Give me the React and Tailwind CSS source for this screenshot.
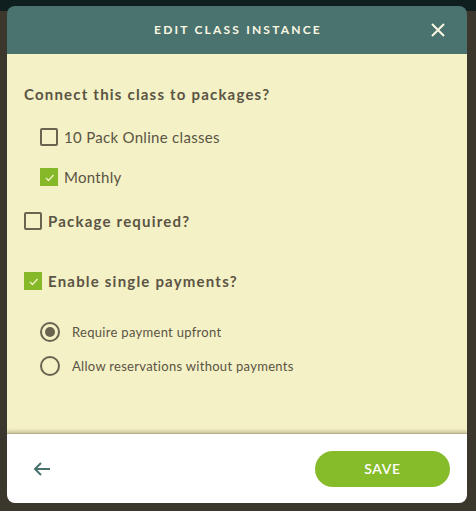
import React from "react";

const Check = () => (
  <svg viewBox="0 0 17 17" className="w-[17px] h-[17px]">
    <path d="M5 9l2.5 2.5L12.5 6" fill="none" stroke="#f4f1c6" strokeWidth="1.3" />
  </svg>
);

const Box = ({ checked }) =>
  checked ? (
    <span className="w-[18px] h-[18px] bg-[#86b92a] flex items-center justify-center shrink-0">
      <Check />
    </span>
  ) : (
    <span className="w-[18px] h-[18px] border-2 border-[#6a6350] rounded-[2px] shrink-0" />
  );

const Radio = ({ checked }) => (
  <span className="w-[20px] h-[20px] rounded-full border-2 border-[#6a6350] flex items-center justify-center shrink-0">
    {checked && <span className="w-[10px] h-[10px] rounded-full bg-[#6a6350]" />}
  </span>
);

export default function App() {
  return (
    <div
      className="w-[476px] h-[511px] bg-[#3b372d] relative overflow-hidden"
      style={{ fontFamily: "Lato, 'Noto Sans', sans-serif" }}
    >
      <div className="h-[11px] bg-[#0f1f20]" />
      <div className="absolute left-[7px] top-[6px] w-[460px] h-[497px] rounded-[8px] overflow-hidden flex flex-col">
        <div className="h-[48px] bg-[#4a7370] flex items-center justify-center relative">
          <span className="text-[12px] font-bold tracking-[2.2px] text-[#fbf8e2] ml-[2px]">
            EDIT CLASS INSTANCE
          </span>
          <svg viewBox="0 0 14 14" className="absolute right-[22px] top-[17px] w-[14px] h-[14px]">
            <path d="M1 1l12 12M13 1L1 13" stroke="#fbf8e2" strokeWidth="2" />
          </svg>
        </div>
        <div className="flex-1 bg-[#f4f1c6] text-[#5b5444] pl-[17px] pt-[31px]">
          <div className="text-[15px] font-bold tracking-[1.2px] leading-[18px]">
            Connect this class to packages?
          </div>
          <div className="pl-[16px] mt-[25px] flex flex-col gap-[22px]">
            <label className="flex items-center gap-[6px] text-[15px] tracking-[0.3px] leading-[18px]">
              <Box />
              10 Pack Online classes
            </label>
            <label className="flex items-center gap-[6px] text-[15px] tracking-[0.3px] leading-[18px]">
              <Box checked />
              Monthly
            </label>
          </div>
          <label className="flex items-center gap-[6px] text-[15px] font-bold tracking-[1.2px] leading-[18px] mt-[26px]">
            <Box />
            Package required?
          </label>
          <label className="flex items-center gap-[6px] text-[15px] font-bold tracking-[1.2px] leading-[18px] mt-[42px]">
            <Box checked />
            Enable single payments?
          </label>
          <div className="pl-[16px] mt-[32px] flex flex-col gap-[14px]">
            <label className="flex items-center gap-[12px] text-[13px] tracking-[0.3px] leading-[20px]">
              <Radio checked />
              Require payment upfront
            </label>
            <label className="flex items-center gap-[12px] text-[13px] tracking-[0.3px] leading-[20px]">
              <Radio />
              Allow reservations without payments
            </label>
          </div>
        </div>
        <div className="h-[70px] bg-white border-t border-[#b4ad86] shadow-[0_-2px_3px_rgba(120,110,70,0.35)] flex items-center justify-between pl-[26px] pr-[17px]">
          <svg viewBox="0 0 18 16" className="w-[18px] h-[16px]">
            <path d="M17 8H2M8 2L2 8l6 6" fill="none" stroke="#4a7370" strokeWidth="2" />
          </svg>
          <button className="w-[135px] h-[36px] rounded-full bg-[#86bb2a] text-white text-[14px] font-semibold tracking-[0.6px]">
            SAVE
          </button>
        </div>
      </div>
    </div>
  );
}
